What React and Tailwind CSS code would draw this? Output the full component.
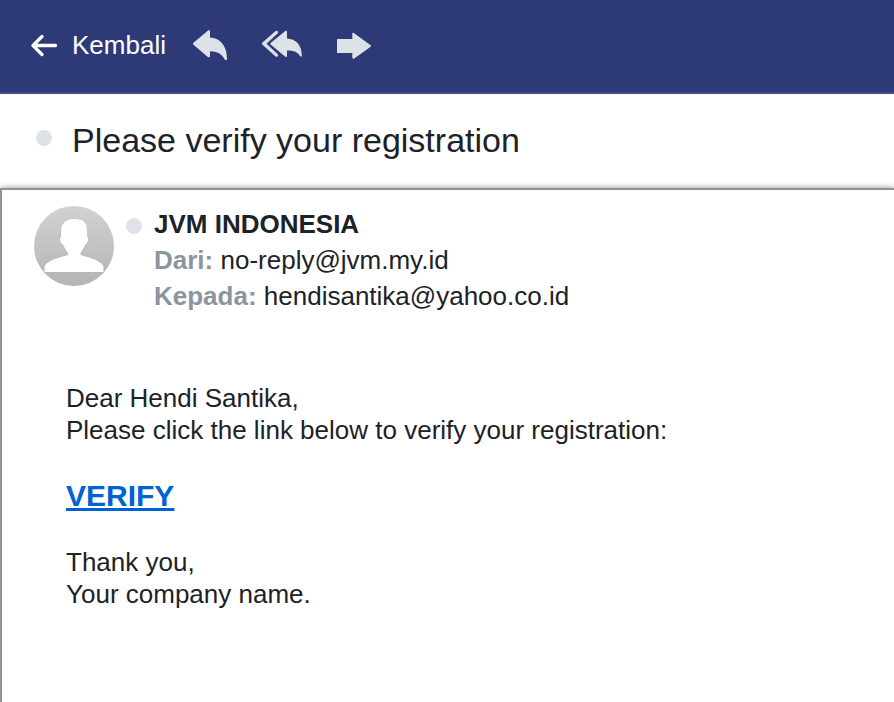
function BackArrow() {
  return (
    <svg className="h-7 w-7" viewBox="0 0 28 28" fill="none" stroke="currentColor" strokeWidth="3.300" strokeLinecap="round" strokeLinejoin="round" aria-hidden="true">
      <path d="M3 14.500H25.500M12 5.500L3 14.500l9 9" />
    </svg>
  );
}

function ReplyIcon() {
  return (
    <svg className="h-8 w-9" viewBox="0 0 36 32" fill="currentColor" aria-hidden="true">
      <path d="M1.500 13.800L15.800 1.700C17 .8 18 1.200 18 2.500V8.500C27.500 9 35 16 35 30C35 31.500 33.500 31.500 32.800 30.500C29.500 25 25.500 22.300 18 22.300V27C18 28.400 17 28.800 15.800 28L1.500 15.800C.7 15 .7 14.600 1.500 13.800Z" />
    </svg>
  );
}

function ReplyAllIcon() {
  return (
    <svg className="h-8 w-[42px]" viewBox="0 0 42 32" fill="currentColor" aria-hidden="true">
      <path d="M1.500 13.600L14.300 2.300C15.200 1.500 16.200 1.600 16.700 2.200C17.400 3 17.200 3.800 16.500 4.500L5.500 14.700L16.500 25C17.200 25.700 17.400 26.500 16.700 27.300C16 28 15 28 14.300 27.300L1.500 15.800C.7 15 .7 14.400 1.500 13.600Z" />
      <path d="M9.900 13.700L24 2.300C25.200 1.500 26 1.800 26 3V9.500C34.500 10 40.800 15.500 40.800 26.500C40.800 28 39.600 28 39 27C36.500 23 33 21.500 26 21.500V26.700C26 28 25.200 28.300 24 27.500L9.900 15.700C9.100 15 9.100 14.400 9.900 13.700Z" />
    </svg>
  );
}

function ForwardIcon() {
  return (
    <svg className="h-8 w-9" viewBox="0 0 36 32" fill="currentColor" aria-hidden="true">
      <path d="M1 11C1 10.300 1.300 10 2 10H16.300V5C16.300 3.800 17.200 3.500 18.200 4.200L34.300 16C35.200 16.700 35.200 17.400 34.300 18.100L18.200 29.400C17.200 30.100 16.300 29.800 16.300 28.600V24H2C1.300 24 1 23.700 1 23Z" />
    </svg>
  );
}

function Avatar() {
  return (
    <svg className="size-20 shrink-0" viewBox="0 0 80 80" role="img" aria-label="JVM INDONESIA">
      <defs>
        <linearGradient id="avatar-fill" x1="0" y1="0" x2="0" y2="1">
          <stop offset="0" stopColor="#d2d2d2" />
          <stop offset="1" stopColor="#b4b4b4" />
        </linearGradient>
      </defs>
      <circle cx="40" cy="40" r="40" fill="url(#avatar-fill)" />
      <path
        d="M33 14.500C37 12.500 46 12.500 50 15.500C53.500 19 53.200 25 53.200 30.500C54.500 31.500 54.200 34 53.700 35.500C53 37.500 52.200 38.500 51 39C50 42 48 44.500 46.300 47.500C46.300 49.500 50 50 55 51.500C63 54 69.500 57.500 69.500 61V66H10.500V61C10.500 57.500 17 54 25 51.500C30 50 34.300 49.500 34.300 47.500C32.300 44.500 30.300 42 29.500 39C28 38.500 27.200 37.500 26.500 35.500C26 34 25.700 31.500 27.200 30.500C27 25 26.500 20 29.500 17C31 17 31 14.500 33 14.500Z"
        fill="#fff"
        stroke="#a9a9a9"
        strokeOpacity=".4"
        strokeWidth="1.500"
        paintOrder="stroke"
      />
    </svg>
  );
}

export default function App() {
  return (
    <div className="flex min-h-screen flex-col bg-white font-['Helvetica_Neue','Liberation_Sans',Arial,sans-serif] text-[26px] text-[#1d2228]">
      <header className="flex items-start border-b-2 border-[#444c85] bg-[#2e3a78] pr-8 pb-[29px] pl-[30px] pt-[27px] text-[#dce2e6]">
        <button type="button" className="flex items-center gap-[14px] leading-9 text-white">
          <BackArrow />
          Kembali
        </button>
        <button type="button" aria-label="Balas" className="ml-[26px] py-0.5">
          <ReplyIcon />
        </button>
        <button type="button" aria-label="Balas semua" className="ml-[33px] py-0.5">
          <ReplyAllIcon />
        </button>
        <button type="button" aria-label="Teruskan" className="ml-[33px] py-0.5">
          <ForwardIcon />
        </button>
      </header>

      <div className="flex items-center gap-5 px-9 pt-6 pb-[26px]">
        <span className="-mt-1 size-4 shrink-0 rounded-full bg-[#dce2e6]" />
        <h1 className="text-[34px] leading-[44px]">Please verify your registration</h1>
      </div>

      <main className="grow border-t-2 border-l-2 border-[#8b959e] bg-white pr-8 pb-12 pl-8 pt-4 shadow-[0_0_6px_rgba(0,0,0,0.45)]">
        <div className="flex items-start">
          <Avatar />
          <span className="mt-3 ml-3 size-4 shrink-0 rounded-full bg-[#dce2e6]" />
          <div className="ml-3 leading-9">
            <h2 className="font-bold">JVM INDONESIA</h2>
            <p><b className="text-[#8b959e]">Dari:</b> no-reply@jvm.my.id</p>
            <p><b className="text-[#8b959e]">Kepada:</b> hendisantika@yahoo.co.id</p>
          </div>
        </div>
        <div className="mt-[68px] px-8 leading-8">
          <p>Dear Hendi Santika,</p>
          <p>Please click the link below to verify your registration:</p>
          <p className="my-8 text-[30px] leading-[36px] font-bold">
            <a href="#verify" className="text-[#0063d1] underline decoration-[3px] underline-offset-2">VERIFY</a>
          </p>
          <p>Thank you,</p>
          <p>Your company name.</p>
        </div>
      </main>
    </div>
  );
}
